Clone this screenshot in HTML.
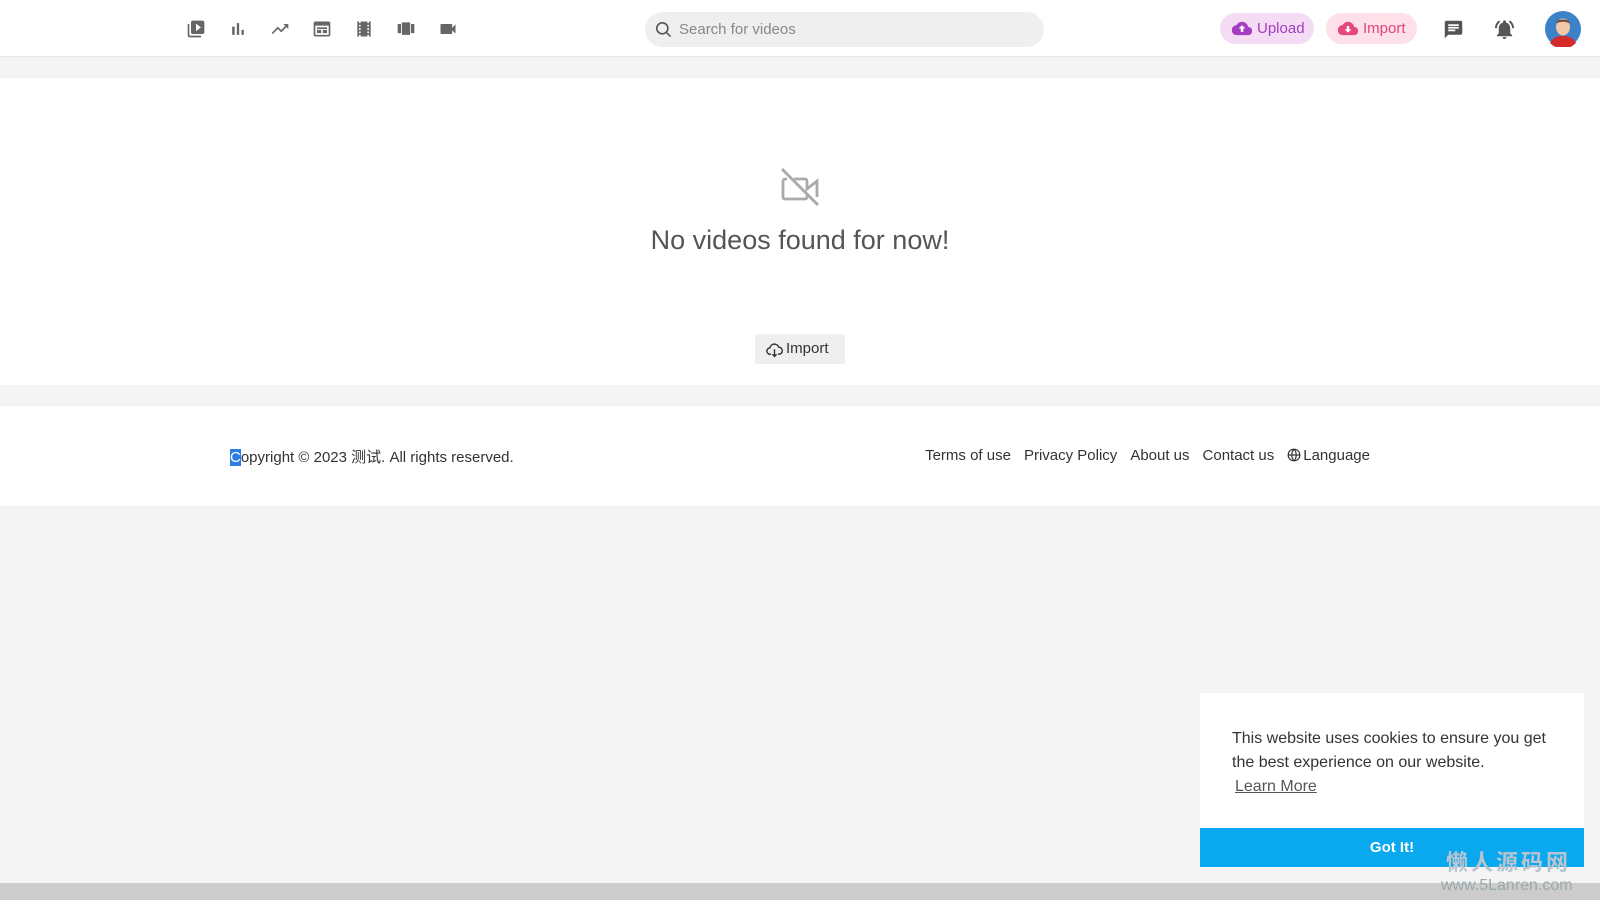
<!DOCTYPE html>
<html><head><meta charset="utf-8"><style>
*{box-sizing:border-box;margin:0;padding:0}
body{width:1600px;height:900px;background:#f4f4f4;font-family:"Liberation Sans","Noto Sans CJK SC",sans-serif;position:relative;overflow:hidden;color:#333}
.hdr{position:absolute;left:0;top:0;width:1600px;height:57px;background:#fff;border-bottom:1px solid #e6e6e6}
.ic{position:absolute;top:19px;width:20px;height:20px}
.search{position:absolute;left:645px;top:12px;width:399px;height:35px;background:#efefef;border-radius:18px}
.search span{position:absolute;left:34px;top:9px;font-size:15px;color:#888}
.pill{position:absolute;top:13px;height:31px;border-radius:16px;font-size:15px;line-height:31px;padding-left:37px}
.main{position:absolute;left:0;top:78px;width:1600px;height:307px;background:#fff}
.foot{position:absolute;left:0;top:406px;width:1600px;height:100px;background:#fff;font-size:15px;color:#333}
.bar{position:absolute;left:0;top:883px;width:1600px;height:17px;background:#ccc}
.ck{position:absolute;left:1200px;top:693px;width:384px;height:174px;background:#fff}
.links span{margin-left:13px}
</style></head><body>
<div class="hdr">
<svg class="ic" style="left:186px" viewBox="0 0 24 24"><path fill="#666" d="M4 6H2v14c0 1.1.9 2 2 2h14v-2H4V6zm16-4H8c-1.1 0-2 .9-2 2v12c0 1.1.9 2 2 2h12c1.1 0 2-.9 2-2V4c0-1.1-.9-2-2-2zm-8 12.5v-9l6 4.5-6 4.5z"/></svg>
<svg class="ic" style="left:228px" viewBox="0 0 24 24"><path fill="#666" d="M5 9.2h3V19H5zM10.6 5h2.8v14h-2.8zm5.6 8H19v6h-2.8z"/></svg>
<svg class="ic" style="left:270px" viewBox="0 0 24 24"><path fill="#666" d="M16 6l2.290 2.29-4.88 4.88-4-4L2 16.59 3.41 18l6-6 4 4 6.3-6.29L22 12V6z"/></svg>
<svg class="ic" style="left:312px" viewBox="0 0 24 24"><path fill="#666" d="M20 3H4c-1.1 0-2 .9-2 2v14c0 1.1.9 2 2 2h16c1.1 0 2-.9 2-2V5c0-1.1-.9-2-2-2zm0 16H4V8h16v11zM6 10h12v2H6zm0 3h5v4H6zm7 0h5v4h-5z"/></svg>
<svg class="ic" style="left:354px" viewBox="0 0 24 24"><path fill="#666" d="M18 3v2h-2V3H8v2H6V3H4v18h2v-2h2v2h8v-2h2v2h2V3h-2zM8 17H6v-2h2v2zm0-4H6v-2h2v2zm0-4H6V7h2v2zm10 8h-2v-2h2v2zm0-4h-2v-2h2v2zm0-4h-2V7h2v2z"/></svg>
<svg class="ic" style="left:396px" viewBox="0 0 24 24"><path fill="#666" d="M2 6h4v11H2zm5 13h10V4H7v15zM18 6h4v11h-4z"/></svg>
<svg class="ic" style="left:438px" viewBox="0 0 24 24"><path fill="#666" d="M17 10.5V7c0-.55-.45-1-1-1H4c-.55 0-1 .45-1 1v10c0 .55.45 1 1 1h12c.55 0 1-.45 1-1v-3.5l4 4v-11l-4 4z"/></svg>
<div class="search"><svg style="position:absolute;left:9px;top:8px" width="19" height="19" viewBox="0 0 24 24"><circle cx="10.5" cy="10.5" r="7" fill="none" stroke="#555" stroke-width="2"/><path d="M16 16l5 5" stroke="#555" stroke-width="2"/></svg><span>Search for videos</span></div>
<div class="pill" style="left:1220px;width:94px;background:#f5dcf5;color:#a33cc0"><svg style="position:absolute;left:12px;top:7px" width="20" height="17" viewBox="0 0 24 20"><path fill="#a53cc4" d="M19.4 8A7.5 7.5 0 0 0 5.4 6 6 6 0 0 0 6 18h13a5 5 0 0 0 .4-10z"/><path fill="#fff" d="M12 6l4 4h-2.5v4h-3v-4H8z"/></svg>Upload</div>
<div class="pill" style="left:1326px;width:91px;background:#fde0e8;color:#e0457b"><svg style="position:absolute;left:12px;top:7px" width="20" height="17" viewBox="0 0 24 20"><path fill="#e54880" d="M19.4 8A7.5 7.5 0 0 0 5.4 6 6 6 0 0 0 6 18h13a5 5 0 0 0 .4-10z"/><path fill="#fff" d="M12 15l4-4h-2.5V7h-3v4H8z"/></svg>Import</div>
<svg style="position:absolute;left:1443px;top:19px" width="21" height="21" viewBox="0 0 24 24"><path fill="#555" d="M20 2H4c-1.1 0-2 .9-2 2v18l4-4h14c1.1 0 2-.9 2-2V4c0-1.1-.9-2-2-2zM6 9h12v2H6zm8 5H6v-2h8zm4-6H6V6h12z"/></svg>
<svg style="position:absolute;left:1493px;top:18px" width="23" height="23" viewBox="0 0 24 24"><path fill="#555" d="M12 22c1.1 0 2-.9 2-2h-4a2 2 0 0 0 2 2zm6-6v-5c0-3.070-1.64-5.64-4.5-6.32V4a1.5 1.5 0 0 0-3 0v.68C7.63 5.36 6 7.92 6 11v5l-2 2v1h16v-1zM7.58 4.08L6.15 2.65A10.4 10.4 0 0 0 2.03 10.5h2a8.4 8.4 0 0 1 3.55-6.42zM19.97 10.5h2a10.5 10.5 0 0 0-4.12-7.85l-1.42 1.43a8.5 8.5 0 0 1 3.54 6.42z"/></svg>
<svg style="position:absolute;left:1545px;top:11px" width="36" height="36" viewBox="0 0 36 36"><circle cx="18" cy="18" r="18" fill="#3b82c8"/><path d="M5 32c3-6 8-7 13-7s10 1 13 7a18 18 0 0 1-26 0z" fill="#d42a2a"/><ellipse cx="18" cy="16" rx="7" ry="8.5" fill="#f1c7a8"/><path d="M11 13c0-6 14-6 14 0-2-3-12-3-14 0z" fill="#6b4a33"/></svg>
</div>
<div class="main">
<svg style="position:absolute;left:779px;top:88px" width="42" height="42" viewBox="0 0 42 42"><path d="M8 13h-2a2 2 0 0 0-2 2v16a2 2 0 0 0 2 2h20a2 2 0 0 0 2-2v-2M15 13h11a2 2 0 0 1 2 2v8l10-8v16" fill="none" stroke="#aaa" stroke-width="2.8"/><path d="M3 3l36 36" stroke="#aaa" stroke-width="2.8"/></svg>
<div style="position:absolute;left:0;width:1600px;top:147px;text-align:center;font-size:27px;color:#555">No videos found for now!</div>
<div style="position:absolute;left:755px;top:256px;width:90px;height:30px;background:#efefef;border-radius:3px;font-size:15px;line-height:30px;color:#333;padding-left:31px"><svg style="position:absolute;left:11px;top:8px" width="17" height="16" viewBox="0 0 24 22"><path d="M7 17H6a4.5 4.5 0 0 1-.5-9A6.5 6.5 0 0 1 18 7a4.5 4.5 0 0 1 0 10h-1M12 10v10m-3-3l3 3 3-3" fill="none" stroke="#333" stroke-width="2"/></svg>Import</div>
</div>
<div class="foot">
<div style="position:absolute;left:230px;top:40px"><span style="background:#2e7de0;color:#fff">C</span>opyright © 2023 测试. All rights reserved.</div>
<div class="links" style="position:absolute;right:230px;top:41px;white-space:nowrap"><span>Terms of use</span><span>Privacy Policy</span><span>About us</span><span>Contact us</span><span><svg width="14" height="14" viewBox="0 0 24 24" style="vertical-align:-2px;margin-right:2px"><circle cx="12" cy="12" r="10" fill="none" stroke="#333" stroke-width="2"/><path d="M2 12h20M12 2c-5 5-5 15 0 20M12 2c5 5 5 15 0 20" fill="none" stroke="#333" stroke-width="2"/></svg>Language</span></div>
</div>
<div class="ck">
<div style="position:absolute;left:32px;top:34px;font-size:16px;line-height:24px;color:#333;width:330px">This website uses cookies to ensure you get the best experience on our website.</div>
<div style="position:absolute;left:35px;top:85px;font-size:16px;color:#555;text-decoration:underline">Learn More</div>
<div style="position:absolute;left:0;top:135px;width:384px;height:39px;background:#0aa9ef;color:#fff;font-weight:bold;font-size:15px;text-align:center;line-height:39px">Got It!</div>
</div>
<div class="bar"></div>
<div style="position:absolute;left:1446px;top:845px;font-size:22px;font-weight:bold;color:#b9c4cf;letter-spacing:3px">懒人源码网</div>
<div style="position:absolute;left:1441px;top:877px;font-size:16px;color:#9aa;">www.5Lanren.com</div>
</body></html>
